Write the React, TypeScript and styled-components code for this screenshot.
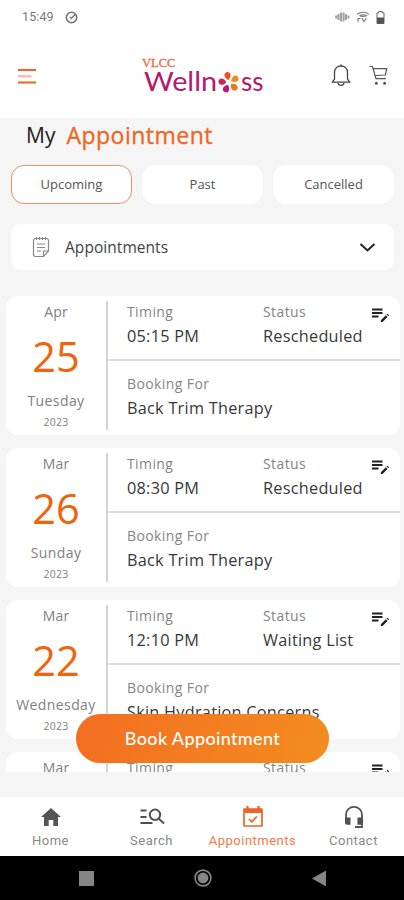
import React from "react";
import styled, { createGlobalStyle } from "styled-components";

const GlobalStyle = createGlobalStyle`
  * { box-sizing: border-box; }
  body { margin: 0; background: #f5f5f5; font-family: "Open Sans", "Noto Sans", sans-serif; }
`;

const Screen = styled.div`
  width: 404px;
  height: 900px;
  display: flex;
  flex-direction: column;
  overflow: hidden;
  background: #f5f5f5;
`;

const StatusBar = styled.div`
  height: 34px;
  flex: none;
  display: flex;
  align-items: center;
  padding: 0 19px 0 22px;
  background: #fff;
`;

const Clock = styled.span`
  width: 43px;
  font: 400 12.5px/16px Roboto, sans-serif;
  letter-spacing: 0.1px;
  color: #777;
`;

const StatusIcons = styled.div`
  margin-left: auto;
  display: flex;
  align-items: center;
  gap: 6px;
`;

const Header = styled.header`
  height: 84px;
  flex: none;
  display: flex;
  align-items: flex-start;
  padding: 20px 15px 0 17px;
  background: #fff;
`;

const MenuIcon = styled.svg`
  margin: 13px 101px 0 0;
`;

const HeaderActions = styled.div`
  margin: 9px 0 0 auto;
  display: flex;
  gap: 17px;
`;

const Heading = styled.h1`
  height: 47px;
  flex: none;
  margin: 0;
  padding: 0 0 0 26px;
  display: flex;
  align-items: flex-start;
  font-weight: 400;
  font-size: 21px;
  line-height: 35px;
  color: #222;
`;

const HeadingAccent = styled.span`
  margin-left: 11px;
  font-size: 23px;
  line-height: 34px;
  font-weight: 500;
  letter-spacing: 0.5px;
  -webkit-text-stroke: 0.3px #eb671f;
  color: #eb671f;
`;

const Tabs = styled.div`
  flex: none;
  display: grid;
  grid-template-columns: repeat(3, 121px);
  column-gap: 10px;
  padding-left: 11px;
`;

const Tab = styled.button<{ $active?: boolean }>`
  height: 39px;
  padding: 0 0 1px;
  border: 1px solid ${(p) => (p.$active ? "#f08b6c" : "#fff")};
  border-radius: 13px;
  background: #fff;
  font: 400 13px/18px "Open Sans", sans-serif;
  color: #555;
`;

const Dropdown = styled.div`
  flex: none;
  height: 46px;
  margin: 20px 10px 0 11px;
  padding: 0 18px 0 21px;
  display: flex;
  align-items: center;
  border-radius: 10px;
  background: #fff;
`;

const DropdownLabel = styled.span`
  flex: 1;
  margin-left: 15px;
  font-size: 15.5px;
  line-height: 22px;
  letter-spacing: 0.05px;
  color: #444;
`;

const List = styled.main`
  height: 476px;
  margin-top: 26px;
  padding: 0 4px 0 6px;
  flex: none;
  overflow: hidden;
`;

const Card = styled.article`
  height: 139px;
  margin-bottom: 13px;
  padding-top: 5px;
  display: flex;
  border-radius: 12px;
  background: #fff;
`;

const DateColumn = styled.div`
  width: 102px;
  height: 129px;
  border-right: 2px solid #d3d3d3;
  display: flex;
  flex-direction: column;
  align-items: center;
  color: #808080;
  font-size: 14px;
  line-height: 20px;
  letter-spacing: 0.2px;
`;

const Month = styled.span`
  margin-top: 1px;
`;

const Day = styled.span`
  height: 60px;
  margin: 4px 0 5px;
  font-size: 41.5px;
  line-height: 60px;
  letter-spacing: 0;
  font-weight: 500;
  color: #ee650e;
`;

const Weekday = styled.span`
  letter-spacing: 0.4px;
`;

const Year = styled.span`
  margin-top: 3px;
  font-size: 10.5px;
  line-height: 16px;
`;

const Details = styled.div`
  flex: 1;
`;

const DetailRow = styled.div<{ $divided?: boolean }>`
  height: ${(p) => (p.$divided ? "60px" : "70px")};
  padding: ${(p) => (p.$divided ? "0" : "12px")} 0 0 19px;
  border-bottom: ${(p) => (p.$divided ? "2px solid #dcdcdc" : "0")};
  display: flex;
`;

const Field = styled.div<{ $width?: number }>`
  width: ${(p) => (p.$width ? `${p.$width}px` : "auto")};
  white-space: nowrap;
`;

const Label = styled.div`
  height: 23px;
  font-size: 14px;
  line-height: 22px;
  letter-spacing: 0.4px;
  color: #858585;
`;

const Value = styled.div`
  font-size: 16.3px;
  line-height: 24px;
  letter-spacing: 0.25px;
  color: #383838;
`;

const EditIcon = styled.svg`
  margin: 6px 0 0;
`;

const BookBar = styled.div`
  height: 25px;
  flex: none;
  position: relative;
`;

const BookButton = styled.button`
  position: absolute;
  left: 76px;
  bottom: 34px;
  width: 253px;
  height: 49px;
  padding: 0 0 2px;
  border: 0;
  border-radius: 25px;
  background: linear-gradient(100deg, #f36e21, #f38c20);
  color: #fff;
  font: 500 18px/26px Lato, sans-serif;
  letter-spacing: 0.35px;
`;

const BottomNav = styled.nav`
  height: 59px;
  flex: none;
  display: grid;
  grid-template-columns: repeat(4, 101px);
  background: #fff;
`;

const NavItem = styled.div`
  padding-top: 8px;
  display: flex;
  flex-direction: column;
  align-items: center;
`;

const NavLabel = styled.span<{ $active?: boolean }>`
  margin-top: 3px;
  font: 400 13px/18px Roboto, sans-serif;
  letter-spacing: 0.48px;
  color: ${(p) => (p.$active ? "#f07b4c" : "#888")};
`;

const SystemNav = styled.div`
  height: 44px;
  flex: none;
  display: flex;
  justify-content: space-between;
  align-items: center;
  padding: 0 78px 0 79px;
  background: #000;
`;

type Appointment = {
  month: string;
  day: string;
  weekday: string;
  time: string;
  status: string;
  treatment: string;
};

const appointments: Appointment[] = [
  { month: "Apr", day: "25", weekday: "Tuesday", time: "05:15 PM", status: "Rescheduled", treatment: "Back Trim Therapy" },
  { month: "Mar", day: "26", weekday: "Sunday", time: "08:30 PM", status: "Rescheduled", treatment: "Back Trim Therapy" },
  { month: "Mar", day: "22", weekday: "Wednesday", time: "12:10 PM", status: "Waiting List", treatment: "Skin Hydration Concerns" },
  { month: "Mar", day: "", weekday: "", time: "", status: "", treatment: "" },
];

const petals: [number, string][] = [
  [-12, "#e2582c"],
  [60, "#f18a1c"],
  [132, "#ee7423"],
  [204, "#b9197a"],
  [276, "#c22a55"],
];

function Logo() {
  return (
    <svg width="126" height="44" viewBox="0 0 126 44">
      <text x="4" y="12.5" fontFamily="Liberation Serif, serif" fontSize="12.5" stroke="#ec6b42" strokeWidth="0.3" fill="#ec6b42" textLength="33.5" lengthAdjust="spacingAndGlyphs">
        VLCC
      </text>
      <g fontFamily="Lato, sans-serif" fontSize="27.5" fill="#b3196e">
        <text x="6" y="36.5" textLength="73" lengthAdjust="spacingAndGlyphs">Welln</text>
        <text x="103" y="36.5" textLength="22.5" lengthAdjust="spacingAndGlyphs">ss</text>
      </g>
      <g transform="translate(91 28.5)">
        {petals.map(([angle, color]) => (
          <path key={angle} d="M0-2.500C-2-4-3.300-6-3.100-7.800C-2.700-11.500 2.700-11.500 3.100-7.800C3.300-6 2-4 0-2.500Z" fill={color} transform={`rotate(${angle})`} />
        ))}
      </g>
    </svg>
  );
}

function AppointmentCard({ item }: { item: Appointment }) {
  return (
    <Card>
      <DateColumn>
        <Month>{item.month}</Month>
        <Day>{item.day}</Day>
        <Weekday>{item.weekday}</Weekday>
        {item.day && <Year>2023</Year>}
      </DateColumn>
      <Details>
        <DetailRow $divided>
          <Field $width={136}>
            <Label>Timing</Label>
            <Value>{item.time}</Value>
          </Field>
          <Field $width={109}>
            <Label>Status</Label>
            <Value>{item.status}</Value>
          </Field>
          <EditIcon width="18" height="17" viewBox="0 0 18 17">
            <path d="M0 2.500h10.500M0 6h10.500M0 9.500h6.500" stroke="#222" strokeWidth="1.900" />
            <path d="M8.800 15v-1.800l5-4.900 1.700 1.700-5 5zM14.600 7.500l.9-.8 1.700 1.700-.9.8z" fill="#222" />
          </EditIcon>
        </DetailRow>
        {item.treatment && (
          <DetailRow>
            <Field>
              <Label>Booking For</Label>
              <Value>{item.treatment}</Value>
            </Field>
          </DetailRow>
        )}
      </Details>
    </Card>
  );
}

export default function App() {
  return (
    <Screen>
      <GlobalStyle />
      <StatusBar>
        <Clock>15:49</Clock>
        <svg width="13" height="13" viewBox="0 0 13 13" fill="none" stroke="#777" strokeWidth="1.6">
          <circle cx="6.5" cy="6.5" r="5.2" />
          <path d="M4.800 6l1.700 1.300L10 3.500" strokeWidth="1.4" />
        </svg>
        <StatusIcons>
          <svg width="15" height="12" viewBox="0 0 15 12" stroke="#a0a0a0" strokeWidth="2" fill="none">
            <path d="M1.200 4.500v3M3.500 3v6M6 1.500v9M8.600 1.500v9M11 3v6M13.500 4.500v3" />
          </svg>
          <svg width="14" height="12" viewBox="0 0 14 12" stroke="#777" strokeWidth="1.1" fill="none">
            <path d="M1 3.2Q7-.8 13 3.2M3.5 4.7Q7 2.8 10.5 4.7Q7 6 3.5 4.7M2 7v4M2 7.5h2.5M6 7l2 3.5L10.5 7" />
          </svg>
          <svg width="9" height="13" viewBox="0 0 9 13">
            <path d="M2.7.5h3.6v1.4H8v10.6H1V1.900h1.700z" fill="#fff" stroke="#666" />
            <path d="M1 6.500h7v6H1z" fill="#555" />
          </svg>
        </StatusIcons>
      </StatusBar>
      <Header>
        <MenuIcon width="20" height="18" viewBox="0 0 20 18">
          <path d="M1 3h18" stroke="#df6940" strokeWidth="2.200" />
          <path d="M1 9.300h13.500" stroke="#f6bda9" strokeWidth="2.400" />
          <path d="M1 15.500h18" stroke="#e4752f" strokeWidth="2.200" />
        </MenuIcon>
        <Logo />
        <HeaderActions>
          <svg width="20" height="25" viewBox="0 0 20 25" fill="none" stroke="#444" strokeWidth="1.300">
            <path d="M1.200 19.200h17.600l-2.300-3V9.500c0-4-2.700-6.500-6.500-6.500S3.500 5.500 3.500 9.500v6.700z" strokeLinejoin="round" />
            <path d="M7 20.200c.6 2.800 5.400 2.800 6 0M10 1.500V3" />
          </svg>
          <svg width="21" height="25" viewBox="0 0 21 25" fill="none" stroke="#555" strokeWidth="1.200">
            <path d="M1.500 3.500h3l3.500 12.200h9.800M5.500 5.700h13.300l-1.500 6.300-9.900 .5" />
            <circle cx="8.300" cy="20.200" r=".9" fill="#222" />
            <circle cx="16.600" cy="20.200" r=".9" fill="#222" />
          </svg>
        </HeaderActions>
      </Header>
      <Heading>
        My<HeadingAccent>Appointment</HeadingAccent>
      </Heading>
      <Tabs>
        <Tab $active>Upcoming</Tab>
        <Tab>Past</Tab>
        <Tab>Cancelled</Tab>
      </Tabs>
      <Dropdown>
        <svg width="18" height="22" viewBox="0 0 18 22" fill="none" stroke="#888" strokeWidth="1.200">
          <path d="M3 2.500h12a2 2 0 0 1 1.500 2V15l-5 5.500H3a2 2 0 0 1-1.500-2v-14A2 2 0 0 1 3 2.500zM11.500 20v-5h5M4.500 1v3M7.500 1v3M10.500 1v3M13.500 1v3M5 8h8M5 11.500h8M5 15h4" />
        </svg>
        <DropdownLabel>Appointments</DropdownLabel>
        <svg width="17" height="11" viewBox="0 0 17 11" fill="none" stroke="#222" strokeWidth="2">
          <path d="M1.500 2l7 6.500 7-6.500" />
        </svg>
      </Dropdown>
      <List>
        {appointments.map((item, index) => (
          <AppointmentCard key={index} item={item} />
        ))}
      </List>
      <BookBar>
        <BookButton>Book Appointment</BookButton>
      </BookBar>
      <BottomNav>
        <NavItem>
          <svg width="24" height="24" viewBox="0 0 24 24" fill="#555">
            <path d="M12 3l10 9h-3v9h-4.700v-6H9.700v6H5v-9H2z" />
          </svg>
          <NavLabel>Home</NavLabel>
        </NavItem>
        <NavItem>
          <svg width="26" height="24" viewBox="0 0 26 24" fill="none" stroke="#505050" strokeWidth="2">
            <path d="M1.500 5.500h6M1.500 12h6M1.500 18h12M19.500 13.500l5.500 5" />
            <circle cx="16" cy="9.800" r="5.200" />
          </svg>
          <NavLabel>Search</NavLabel>
        </NavItem>
        <NavItem>
          <svg width="24" height="24" viewBox="0 0 24 24" fill="none" stroke="#eb6425" strokeWidth="1.700">
            <path d="M3 4h18v17H3z" strokeLinejoin="round" />
            <path d="M3 6h18" strokeWidth="4" />
            <path d="M6.500 1v3M17.500 1v3" strokeWidth="2.200" />
            <path d="M8 14l2.800 2.800 5-5.300" />
          </svg>
          <NavLabel $active>Appointments</NavLabel>
        </NavItem>
        <NavItem>
          <svg width="24" height="24" viewBox="0 0 24 24" fill="none" stroke="#555">
            <path d="M4 13V9.500a8 7.600 0 0 1 16 0V13M20 18v4h-7" strokeWidth="1.800" />
            <path d="M3 12.500h5.500v7.300H5a2 2 0 0 1-2-2zM15.500 12.500H21v5.300a2 2 0 0 1-2 2h-3.500z" fill="#505050" stroke="none" />
          </svg>
          <NavLabel>Contact</NavLabel>
        </NavItem>
      </BottomNav>
      <SystemNav>
        <svg width="15" height="15">
          <path d="M0 0h15v15H0z" fill="#858585" />
        </svg>
        <svg width="18" height="18" viewBox="0 0 18 18">
          <circle cx="9" cy="9" r="7.900" fill="none" stroke="#858585" strokeWidth="1.600" />
          <circle cx="9" cy="9" r="5.400" fill="#858585" />
        </svg>
        <svg width="14" height="17" viewBox="0 0 14 17">
          <path d="M0 8.500L14 .5v16z" fill="#858585" />
        </svg>
      </SystemNav>
    </Screen>
  );
}
